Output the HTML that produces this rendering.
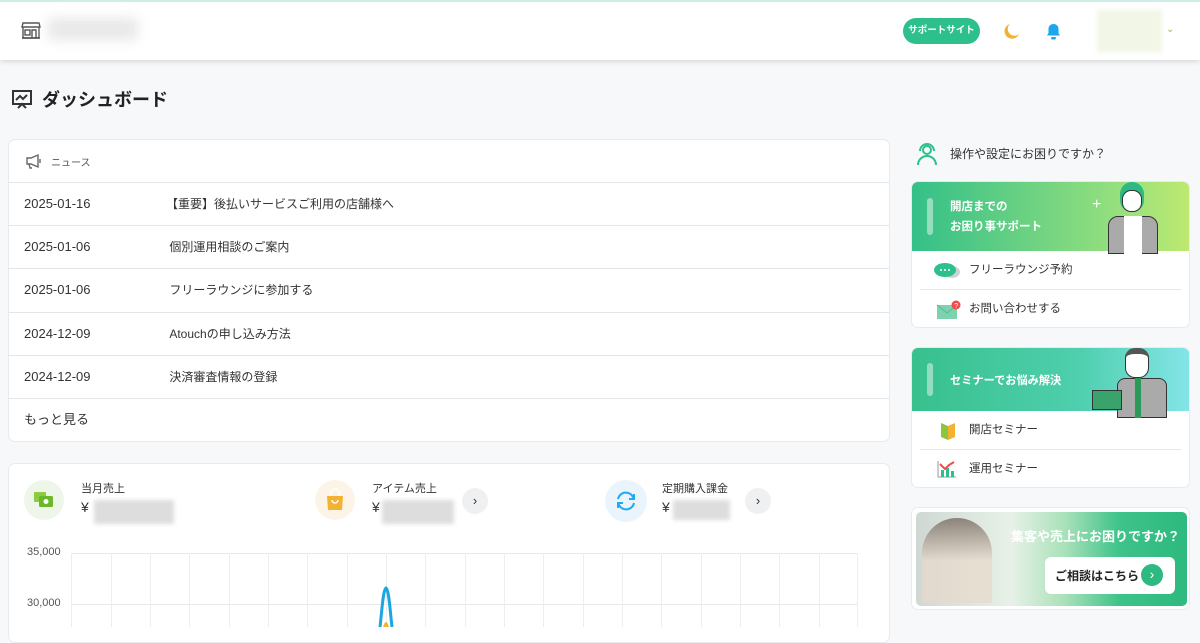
<!DOCTYPE html>
<html><head><meta charset="utf-8"><style>
*{box-sizing:border-box;margin:0;padding:0}
body{width:1200px;height:627px;overflow:hidden;background:#f6f8fa;font-family:"Liberation Sans","Noto Sans CJK JP",sans-serif;color:#333;position:relative}
.hdr{position:absolute;left:0;top:0;width:1200px;height:60px;background:#fff;border-top:2px solid #cdeee6;box-shadow:0 2px 5px rgba(0,0,0,.12)}
.abs{position:absolute;white-space:nowrap}
.card{position:absolute;background:#fff;border:1px solid #e8ebee;border-radius:7px;overflow:hidden}
.row{position:absolute;left:0;width:100%;height:43px;border-top:1px solid #e3e6e9;font-size:13px;line-height:42px}
.row .d{position:absolute;left:15px}.row .t{position:absolute;left:157px;font-size:12px}
.blur{background:#ddd;filter:blur(2px)}
.item{position:absolute;left:8px;right:8px;height:39px;font-size:11.5px;line-height:39px;padding-left:49px;color:#333}
.vl{position:absolute;top:553px;width:1px;height:74px;background:#eceef0}
</style></head><body>
<div class="hdr">
 <svg class="abs" style="left:21px;top:18px" width="20" height="20" viewBox="0 0 20 20" fill="none" stroke="#555" stroke-width="1.4"><path d="M2 3h16l1 4H1z"/><path d="M2 7v11h16V7"/><rect x="4" y="10" width="5" height="5"/><path d="M11 18v-8h4v8"/><path d="M1 18h18"/></svg>
 <div class="abs blur" style="left:48px;top:16px;width:90px;height:22px;background:#e8e8e8;filter:blur(6px)"></div>
 <div class="abs" style="left:903px;top:16px;width:77px;height:26px;border-radius:13px;background:#2ec08c;color:#fff;font-size:9.5px;font-weight:bold;line-height:26px;text-align:center">サポートサイト</div>
 <svg class="abs" style="left:1004px;top:21px" width="16" height="17" viewBox="0 0 16 17"><path d="M6 1a7.5 7.5 0 1 0 9 10A6.5 6.5 0 0 1 6 1z" fill="#f1b233"/></svg>
 <svg class="abs" style="left:1046px;top:21px" width="15" height="17" viewBox="0 0 15 17"><path d="M7.5 1c-3 0-5 2.2-5 5v4l-1.5 2.5h13L12.5 10V6c0-2.8-2-5-5-5z" fill="#1aa7f0"/><rect x="5" y="14" width="5" height="2.5" rx="1.2" fill="#1aa7f0"/></svg>
 <div class="abs" style="left:1097px;top:8px;width:65px;height:42px;background:#f1f6e7;filter:blur(2px)"></div>
 <div class="abs" style="left:1166px;top:22px;font-size:10px;color:#9bc04a">⌄</div>
</div>
<svg class="abs" style="left:11px;top:88px" width="22" height="22" viewBox="0 0 22 22" fill="none" stroke="#333" stroke-width="2"><rect x="2" y="3" width="18" height="13"/><path d="M5 12l4-4 3 3 4-4"/><path d="M7 20l4-4 4 4"/></svg>
<div class="abs" style="left:42px;top:86px;font-size:18px;font-weight:bold;color:#222">ダッシュボード</div>

<div class="card" style="left:8px;top:139px;width:882px;height:303px">
 <svg class="abs" style="left:16px;top:13px" width="18" height="16" viewBox="0 0 18 16" fill="none" stroke="#666" stroke-width="1.4"><path d="M2 5h4l7-3v12l-7-3H2z"/><path d="M4 11l1 4h2"/><path d="M15 6v4"/></svg>
 <div class="abs" style="left:42px;top:14px;font-size:10px;color:#555">ニュース</div>
 <div class="row" style="top:42px"><span class="d">2025-01-16</span><span class="t">【重要】後払いサービスご利用の店舗様へ</span></div>
 <div class="row" style="top:85px"><span class="d">2025-01-06</span><span class="t">&nbsp;個別運用相談のご案内</span></div>
 <div class="row" style="top:128px"><span class="d">2025-01-06</span><span class="t">&nbsp;フリーラウンジに参加する</span></div>
 <div class="row" style="top:172px"><span class="d">2024-12-09</span><span class="t">&nbsp;Atouchの申し込み方法</span></div>
 <div class="row" style="top:215px"><span class="d">2024-12-09</span><span class="t">&nbsp;決済審査情報の登録</span></div>
 <div class="row" style="top:258px"><span class="d">もっと見る</span></div>
</div>

<div class="card" style="left:8px;top:463px;width:882px;height:180px"></div>
<div class="abs" style="left:24px;top:480px;width:40px;height:40px;border-radius:50%;background:#eef6ea"></div>
<svg class="abs" style="left:33px;top:490px" width="22" height="20" viewBox="0 0 22 20"><rect x="1" y="2" width="12" height="10" rx="1" fill="#8ccc3e"/><rect x="6" y="6" width="14" height="11" rx="1.5" fill="#6bb82b"/><circle cx="13" cy="11.5" r="2.5" fill="#fff"/></svg>
<div class="abs" style="left:81px;top:480px;font-size:11px">当月売上</div>
<div class="abs" style="left:81px;top:499px;font-size:14px">¥</div>
<div class="abs blur" style="left:94px;top:500px;width:80px;height:24px"></div>
<div class="abs" style="left:315px;top:480px;width:40px;height:40px;border-radius:50%;background:#fdf4e8"></div>
<svg class="abs" style="left:325px;top:488px" width="20" height="24" viewBox="0 0 20 24"><path d="M2 8h16l-1 14H3z" fill="#f4b233"/><path d="M6 8V5a4 4 0 0 1 8 0v3M7 12a3 3 0 0 0 6 0" fill="none" stroke="#fff" stroke-width="1.4"/></svg>
<div class="abs" style="left:372px;top:480px;font-size:11px">アイテム売上</div>
<div class="abs" style="left:372px;top:499px;font-size:14px">¥</div>
<div class="abs blur" style="left:382px;top:500px;width:72px;height:24px"></div>
<div class="abs" style="left:462px;top:488px;width:26px;height:26px;border-radius:50%;background:#eef0f2;text-align:center;line-height:25px;font-size:13px">›</div>
<div class="abs" style="left:605px;top:480px;width:42px;height:42px;border-radius:50%;background:#e9f4fd"></div>
<svg class="abs" style="left:614px;top:490px" width="24" height="22" viewBox="0 0 24 22" fill="none" stroke="#22aaf0" stroke-width="2"><path d="M4 9a8 8 0 0 1 15-2l1 2M20 13a8 8 0 0 1-15 2l-1-2"/><path d="M20 4v5h-5M4 18v-5h5"/></svg>
<div class="abs" style="left:662px;top:480px;font-size:11px">定期購入課金</div>
<div class="abs" style="left:662px;top:499px;font-size:14px">¥</div>
<div class="abs blur" style="left:673px;top:500px;width:57px;height:20px"></div>
<div class="abs" style="left:745px;top:488px;width:26px;height:26px;border-radius:50%;background:#eef0f2;text-align:center;line-height:25px;font-size:13px">›</div>
<div class="abs" style="left:27px;top:546px;font-size:11px;color:#555">35,000</div>
<div class="abs" style="left:27px;top:597px;font-size:11px;color:#555">30,000</div>
<div class="abs" style="left:71px;top:553px;width:787px;height:1px;background:#e6e8ea"></div>
<div class="abs" style="left:71px;top:604px;width:787px;height:1px;background:#e6e8ea"></div>
<div class="vl" style="left:71px"></div><div class="vl" style="left:111px"></div><div class="vl" style="left:150px"></div><div class="vl" style="left:189px"></div><div class="vl" style="left:229px"></div><div class="vl" style="left:268px"></div><div class="vl" style="left:307px"></div><div class="vl" style="left:347px"></div><div class="vl" style="left:386px"></div><div class="vl" style="left:425px"></div><div class="vl" style="left:465px"></div><div class="vl" style="left:504px"></div><div class="vl" style="left:543px"></div><div class="vl" style="left:583px"></div><div class="vl" style="left:622px"></div><div class="vl" style="left:661px"></div><div class="vl" style="left:701px"></div><div class="vl" style="left:740px"></div><div class="vl" style="left:779px"></div><div class="vl" style="left:819px"></div><div class="vl" style="left:857px"></div>
<svg class="abs" style="left:370px;top:580px" width="32" height="47" viewBox="0 0 32 47" fill="none"><path d="M10 47C12 30 13 10 16 8 19 10 20 30 22 47" stroke="#1aa7e0" stroke-width="3"/><path d="M13 47c1-3 2-5 3-5s2 2 3 5" fill="#f4b233"/></svg>

<svg class="abs" style="left:915px;top:142px" width="24" height="24" viewBox="0 0 24 24" fill="none" stroke="#2ec08c" stroke-width="2"><circle cx="12" cy="8" r="4"/><path d="M5 9a7 7 0 0 1 14 0"/><path d="M3 23a9 9 0 0 1 18 0"/></svg>
<div class="abs" style="left:950px;top:145px;font-size:12px;color:#333">操作や設定にお困りですか？</div>

<div class="card" style="left:911px;top:181px;width:279px;height:147px">
 <div class="abs" style="left:0;top:0;width:279px;height:69px;background:linear-gradient(90deg,#34c089,#9ee27c 80%,#bfe96e)"></div>
 <div class="abs" style="left:15px;top:16px;width:6px;height:37px;border-radius:3px;background:rgba(255,255,255,.45)"></div>
 <div class="abs" style="left:38px;top:15px;font-size:11.5px;font-weight:bold;color:#fff;line-height:20px">開店までの<br>お困り事サポート</div>
 <div class="abs" style="left:180px;top:14px;color:#fff;font-size:16px">+</div>
 <div class="abs" style="left:196px;top:0;width:60px;height:72px">
  <div class="abs" style="left:12px;top:0;width:24px;height:30px;border-radius:12px;background:#2eb884"></div>
  <div class="abs" style="left:14px;top:8px;width:20px;height:22px;border-radius:9px;background:#fff;border:1px solid #333"></div>
  <div class="abs" style="left:0;top:34px;width:50px;height:38px;border-radius:10px 10px 0 0;background:#aaa;border:1px solid #333"></div>
  <div class="abs" style="left:16px;top:34px;width:18px;height:38px;background:#fff"></div>
 </div>
 <div class="item" style="top:69px;border-bottom:1px solid #e5e7ea">フリーラウンジ予約</div>
 <svg class="abs" style="left:21px;top:80px" width="28" height="18" viewBox="0 0 28 18"><ellipse cx="19" cy="10" rx="8" ry="6" fill="#ccd3d8"/><ellipse cx="12" cy="8" rx="11" ry="7" fill="#2ec08c"/><circle cx="8" cy="8" r="1" fill="#fff"/><circle cx="12" cy="8" r="1" fill="#fff"/><circle cx="16" cy="8" r="1" fill="#fff"/></svg>
 <div class="item" style="top:108px">お問い合わせする</div>
 <svg class="abs" style="left:24px;top:118px" width="26" height="20" viewBox="0 0 26 20"><rect x="1" y="5" width="20" height="14" fill="#7dd3b0"/><path d="M1 5l10 8 10-8" stroke="#4cbf90" fill="none"/><circle cx="20" cy="5" r="4.5" fill="#ef4c4c"/><text x="18.2" y="8" font-size="7" fill="#fff" font-family="Liberation Sans">?</text></svg>
</div>

<div class="card" style="left:911px;top:347px;width:279px;height:141px">
 <div class="abs" style="left:0;top:0;width:279px;height:63px;background:linear-gradient(90deg,#38c08d,#4fcfae 60%,#85e5e8)"></div>
 <div class="abs" style="left:15px;top:15px;width:6px;height:33px;border-radius:3px;background:rgba(255,255,255,.45)"></div>
 <div class="abs" style="left:38px;top:24px;font-size:11.2px;font-weight:bold;color:#fff">セミナーでお悩み解決</div>
 <div class="abs" style="left:205px;top:0;width:50px;height:70px">
  <div class="abs" style="left:8px;top:0;width:24px;height:30px;border-radius:10px;background:#fff;border:1px solid #333;border-top:6px solid #555"></div>
  <div class="abs" style="left:0;top:30px;width:50px;height:40px;border-radius:8px 8px 0 0;background:#aaa;border:1px solid #333"></div>
  <div class="abs" style="left:18px;top:30px;width:6px;height:40px;background:#2a9a5a"></div>
 </div>
 <div class="abs" style="left:180px;top:42px;width:30px;height:20px;background:#3aa36b;border:1px solid #333"></div>
 <div class="item" style="top:63px;border-bottom:1px solid #e5e7ea">開店セミナー</div>
 <svg class="abs" style="left:28px;top:74px" width="16" height="18" viewBox="0 0 16 18"><path d="M1 1l7 3v14L1 15z" fill="#8cc63f"/><path d="M15 1l-7 3v14l7-3z" fill="#f4b233"/></svg>
 <div class="item" style="top:102px">運用セミナー</div>
 <svg class="abs" style="left:25px;top:112px" width="20" height="18" viewBox="0 0 20 18"><path d="M1 1v16h18" stroke="#999" fill="none"/><rect x="4" y="10" width="3" height="7" fill="#2ec08c"/><rect x="9" y="8" width="3" height="9" fill="#2ec08c"/><rect x="14" y="11" width="3" height="6" fill="#2ec08c"/><path d="M3 4l5 5 4-4 5-3" stroke="#ef4c4c" stroke-width="2" fill="none"/></svg>
</div>

<div class="card" style="left:911px;top:507px;width:279px;height:103px">
 <div class="abs" style="left:4px;top:4px;width:271px;height:94px;border-radius:5px;background:linear-gradient(90deg,#cfd8d3,#e8f1e7 35%,#a9e1b9 55%,#3ec389 75%,#2db97f)"></div>
 <div class="abs" style="left:10px;top:10px;width:70px;height:85px;border-radius:35px 35px 0 0;background:linear-gradient(#6a5b50,#e9d9cb 50%);opacity:.7"></div>
 <div class="abs" style="left:99px;top:18px;font-size:13px;font-weight:bold;color:#fff">集客や売上にお困りですか？</div>
 <div class="abs" style="left:133px;top:49px;width:130px;height:37px;border-radius:6px;background:#fff"></div>
 <div class="abs" style="left:143px;top:59px;font-size:12px;font-weight:bold;color:#222">ご相談はこちら</div>
 <div class="abs" style="left:229px;top:56px;width:22px;height:22px;border-radius:50%;background:#2db97f;color:#fff;text-align:center;line-height:21px;font-size:14px">›</div>
</div>
</body></html>
